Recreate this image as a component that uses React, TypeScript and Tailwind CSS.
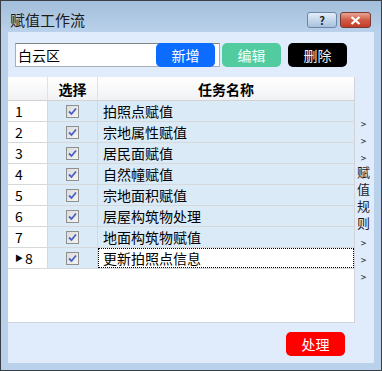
import React from 'react'

const rows = [
  '拍照点赋值',
  '宗地属性赋值',
  '居民面赋值',
  '自然幢赋值',
  '宗地面积赋值',
  '层屋构筑物处理',
  '地面构筑物赋值',
  '更新拍照点信息',
]

const font = { fontFamily: '"Noto Sans CJK SC", "Liberation Sans", sans-serif' }

function Check() {
  return (
    <div className="flex h-[13px] w-[13px] items-center justify-center border border-[#8e8f8f] bg-gradient-to-br from-[#dcdcdc] to-[#f4f4f4]">
      <svg width="9" height="9" viewBox="0 0 9 9">
        <path d="M1 4.5 L3.5 7 L8 1.5" fill="none" stroke="#4a5fc4" strokeWidth="1.8" />
      </svg>
    </div>
  )
}

function TitleButtons() {
  return (
    <div className="mt-[11px] flex gap-[3px] pr-[10px]">
      <div className="flex h-[16px] w-[30px] items-center justify-center rounded-[3px] border border-[#6d87a8] bg-gradient-to-b from-[#e4eef9] via-[#c5d7ec] to-[#a9c1de]">
        <span className="text-[11px] font-bold leading-none text-[#222]" style={font}>?</span>
      </div>
      <div className="flex h-[16px] w-[31px] items-center justify-center rounded-[3px] border border-[#7a3a33] bg-gradient-to-b from-[#e8a493] via-[#cf5b45] to-[#c23b28]">
        <svg width="11" height="9" viewBox="0 0 11 9">
          <path d="M1.5 1 L9.5 8 M9.5 1 L1.5 8" stroke="#fff" strokeWidth="2.2" />
        </svg>
      </div>
    </div>
  )
}

function Arrow() {
  return <div className="flex h-[17px] items-center text-[10px] leading-none">&gt;</div>
}

export default function App() {
  return (
    <div
      className="flex h-[371px] w-[382px] flex-col border border-[#3a3f45] bg-[#b9d1ea]"
      style={font}
    >
      <div className="flex h-[31px] items-start justify-between bg-gradient-to-b from-[#a3bedb] to-[#b9d1ea]">
        <div className="pl-[9px] pt-[10px] text-[15px] leading-[18px] text-[#1b1b1b]">赋值工作流</div>
        <TitleButtons />
      </div>

      <div className="mx-[7px] flex h-[331px] flex-col bg-[#e0ecfc]">
        <div className="mt-[11px] flex h-[24px] pl-[7px]">
          <div className="flex h-[24px] w-[205px] items-center border border-[#a9afb8] border-t-[#7e848c] bg-white pl-[2px] text-[14px] leading-none text-black">
            白云区
          </div>
          <button className="relative ml-[-64px] flex h-[24px] w-[59px] items-center justify-center rounded-[5px] bg-[#0b6cff] text-[14px] leading-none text-white">
            新增
          </button>
          <button className="ml-[7px] flex h-[24px] w-[59px] items-center justify-center rounded-[5px] bg-[#52cc9f] text-[14px] leading-none text-[#f2fff9]">
            编辑
          </button>
          <button className="ml-[7px] flex h-[24px] w-[59px] items-center justify-center rounded-[5px] bg-black text-[14px] leading-none text-[#f0f0f0]">
            删除
          </button>
        </div>

        <div className="mt-[10px] flex h-[246px]">
          <div className="flex w-[347px] flex-col border-r border-b border-[#d0d3d8] bg-white">
            <div className="flex h-[24px] border-b border-[#d2d2d2] bg-gradient-to-b from-white to-[#f1f2f4] text-[14px] font-bold leading-none text-black">
              <div className="w-[40px] border-r border-[#e2e2e2]" />
              <div className="flex w-[50px] items-center justify-center border-r border-[#e2e2e2]">选择</div>
              <div className="flex flex-1 items-center justify-center">任务名称</div>
            </div>
            {rows.map((name, i) => {
              const last = i === rows.length - 1
              return (
                <div key={i} className="flex h-[21px] border-b border-[#d6d9dc] text-[14px] leading-none text-black">
                  <div className="flex w-[40px] items-center border-r border-[#d6d9dc] bg-white pl-[7px]">
                    {last && <span className="mr-[2px] text-[8px] leading-none">▶</span>}
                    {i + 1}
                  </div>
                  <div className="flex w-[50px] items-center justify-center border-r border-[#d6d9dc] bg-[#daebf7]">
                    <Check />
                  </div>
                  {last ? (
                    <div className="flex flex-1 items-center border border-dotted border-black bg-white pl-[4px]">{name}</div>
                  ) : (
                    <div className="flex flex-1 items-center bg-[#daebf7] pl-[5px]">{name}</div>
                  )}
                </div>
              )
            })}
          </div>
          <div className="flex flex-1 flex-col items-center justify-center pr-[2px] text-[#1b1b1b]">
            <Arrow />
            <Arrow />
            <Arrow />
            <div className="h-[68px] text-[13px] leading-[17px] tracking-[4px] [writing-mode:vertical-rl]">赋值规则</div>
            <Arrow />
            <Arrow />
            <Arrow />
          </div>
        </div>

        <div className="mt-[9px] flex justify-end pr-[29px]">
          <button className="flex h-[24px] w-[59px] items-center justify-center rounded-[5px] bg-[#ff0000] text-[14px] leading-none text-white">
            处理
          </button>
        </div>
      </div>
    </div>
  )
}
